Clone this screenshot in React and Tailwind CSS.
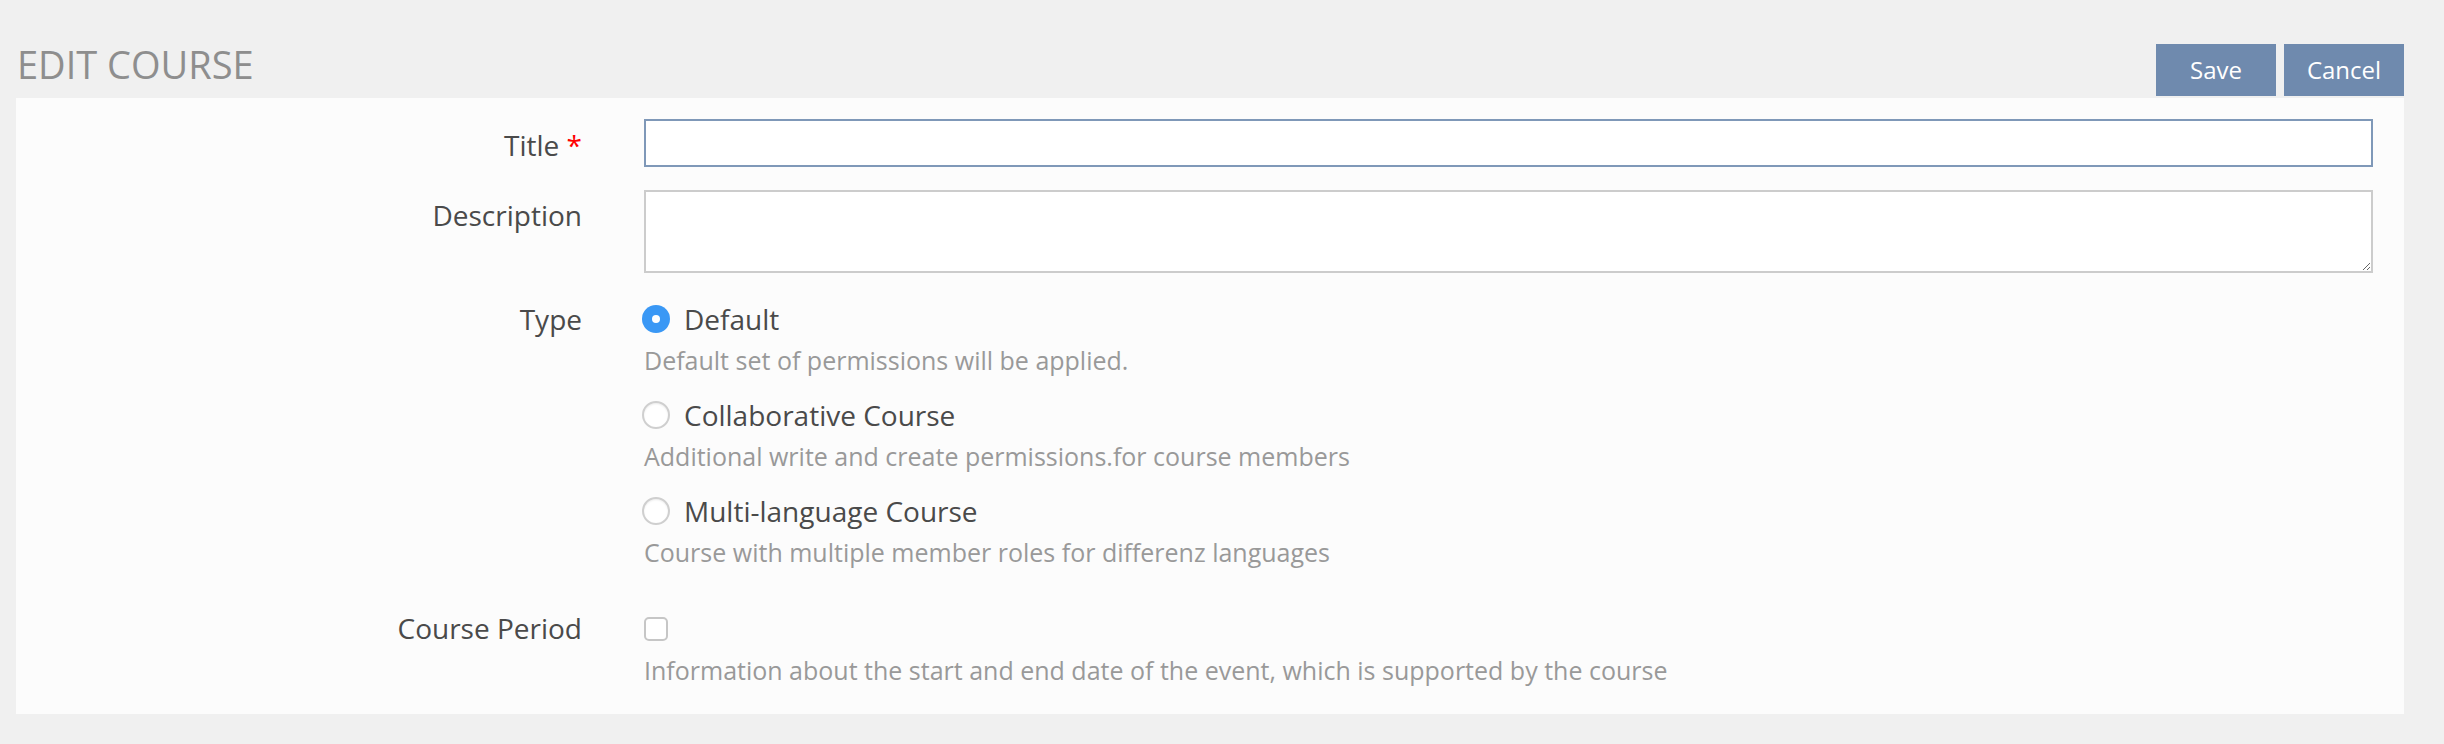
import React, { useState } from 'react';

const types = [
  { value: 'default', label: 'Default', help: 'Default set of permissions will be applied.' },
  { value: 'collaborative', label: 'Collaborative Course', help: 'Additional write and create permissions.for course members' },
  { value: 'multilang', label: 'Multi-language Course', help: 'Course with multiple member roles for differenz languages' },
];

const Radio = ({ checked, onClick }) => (
  <button
    type="button"
    onClick={onClick}
    className={
      checked
        ? 'ml-[-2px] mt-[6px] flex h-[28px] w-[28px] shrink-0 items-center justify-center rounded-full bg-[#3a98f5]'
        : 'ml-[-2px] mt-[6px] h-[28px] w-[28px] shrink-0 rounded-full border-2 border-[#cfcfcf] bg-white shadow-[inset_0_1px_2px_rgba(0,0,0,0.08)]'
    }
  >
    {checked && <span className="h-[8px] w-[8px] rounded-full bg-white" />}
  </button>
);

export default function App() {
  const [title, setTitle] = useState('');
  const [description, setDescription] = useState('');
  const [type, setType] = useState('default');
  const [period, setPeriod] = useState(false);

  return (
    <div className="min-h-screen bg-[#f0f0f0] font-['Open_Sans',sans-serif]">
      {/* Header */}
      <div className="flex items-start justify-between pl-[17px] pr-[40px] pt-[44px] pb-[2px]">
        <h1 className="mt-[-6px] text-[38px] leading-[52px] text-[#8e8e8e]">EDIT COURSE</h1>
        <div className="flex gap-2">
          <button className="h-[52px] w-[120px] bg-[#6f8aae] text-[24px] text-white">Save</button>
          <button className="h-[52px] w-[120px] bg-[#6f8aae] text-[24px] text-white">Cancel</button>
        </div>
      </div>

      {/* Form card */}
      <div className="ml-[16px] mr-[40px] bg-[#fcfcfc] pt-[21px] pb-[28px] pr-[31px] text-[#4a4a4a]">
        <div className="flex gap-[62px]">
          <label className="w-[566px] shrink-0 pt-[2px] text-right text-[28px] leading-[48px]">
            Title <span className="text-[#f00]">*</span>
          </label>
          <input
            value={title}
            onChange={(e) => setTitle(e.target.value)}
            className="h-[48px] flex-1 border-2 border-[#7f98b8] bg-white px-3 text-[28px] outline-none"
          />
        </div>

        <div className="mt-[21px] flex gap-[62px]">
          <label className="w-[566px] shrink-0 pt-[1px] text-right text-[28px] leading-[48px]">Description</label>
          <textarea
            value={description}
            onChange={(e) => setDescription(e.target.value)}
            className="h-[83px] flex-1 border-2 border-[#cccccc] bg-white px-3 text-[28px] outline-none"
          />
        </div>

        <div className="mt-[26px] flex gap-[62px]">
          <label className="w-[566px] shrink-0 text-right text-[28px] leading-[40px]">Type</label>
          <div className="flex flex-1 flex-col gap-[19px]">
            {types.map((t) => (
              <div key={t.value}>
                <div className="flex gap-[14px]">
                  <Radio checked={type === t.value} onClick={() => setType(t.value)} />
                  <span className="text-[28px] leading-[40px]">{t.label}</span>
                </div>
                <p className="mt-[5px] text-[25px] leading-[32px] text-[#999]">{t.help}</p>
              </div>
            ))}
          </div>
        </div>

        <div className="mt-[40px] flex gap-[62px]">
          <label className="w-[566px] shrink-0 text-right text-[28px] leading-[40px]">Course Period</label>
          <div className="flex-1">
            <div className="h-[40px] pt-[9px]">
              <button
                type="button"
                onClick={() => setPeriod(!period)}
                className="block h-[24px] w-[24px] rounded-[5px] border-2 border-[#c6c6c6] bg-white"
              />
            </div>
            <p className="mt-[6px] text-[25px] leading-[32px] text-[#999]">
              Information about the start and end date of the event, which is supported by the course
            </p>
          </div>
        </div>
      </div>
    </div>
  );
}
